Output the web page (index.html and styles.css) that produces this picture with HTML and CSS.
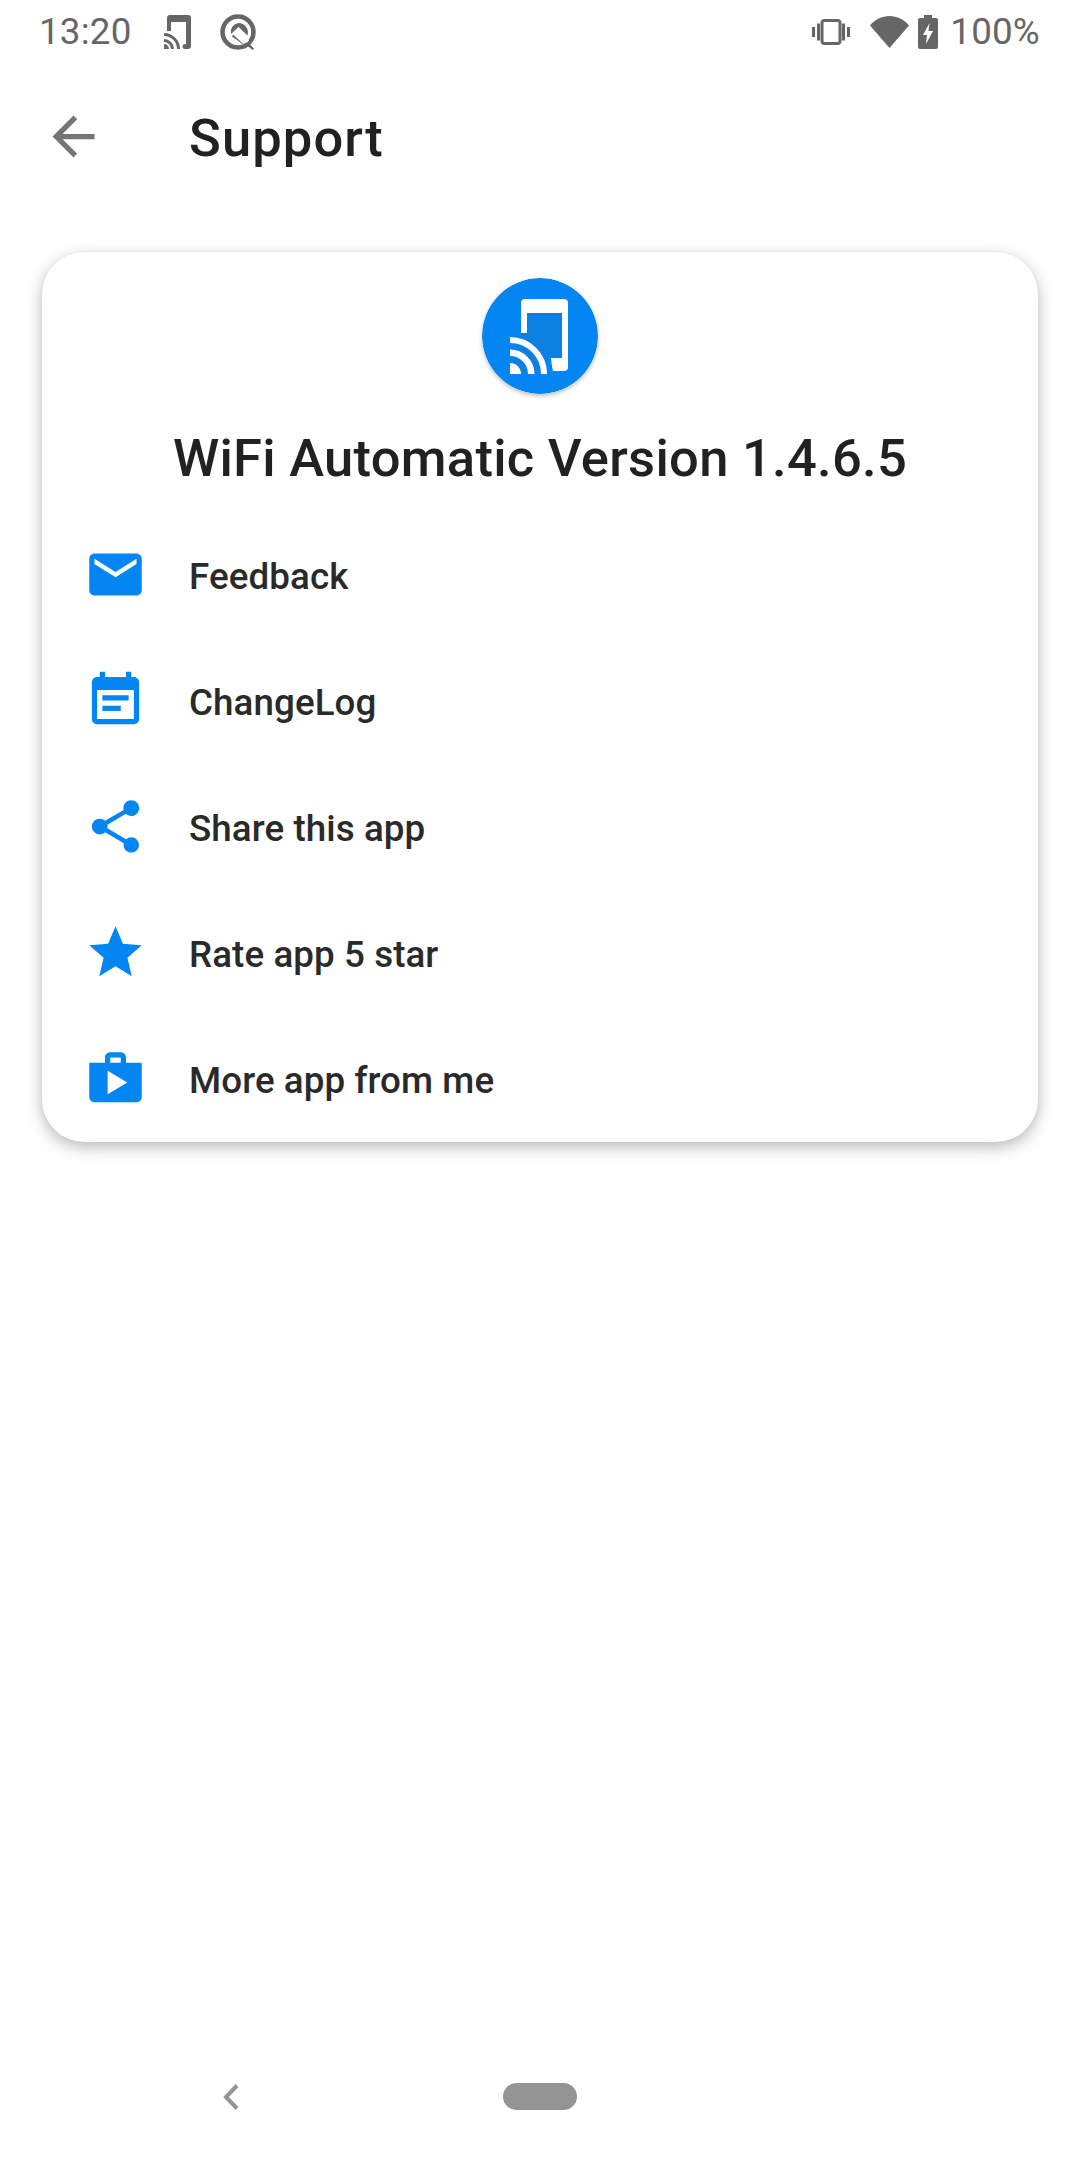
FILE: index.html
```html
<!DOCTYPE html>
<html lang="en">
<head>
  <meta charset="UTF-8">
  <meta name="viewport" content="width=device-width, initial-scale=1.0">
  <title>Support</title>
  <link rel="stylesheet" href="styles.css">
</head>
<body>
  <div class="status-bar">
    <span class="status-text time">13:20</span>
    <svg class="status-cast" viewBox="0 0 29 36"><path d="M7 1h18a3 3 0 0 1 3 3v28a3 3 0 0 1-3 3h-3a2.500 2.500 0 0 1 0-5h1V8H8v9H4V4a3 3 0 0 1 3-3z"/><path d="M1 19a16 16 0 0 1 16 16h-3A13 13 0 0 0 1 22z"/><path d="M1 25a10 10 0 0 1 10 10H8a7 7 0 0 0-7-7z"/><path d="M1 30a5 5 0 0 1 5 5H1z"/></svg>
    <svg class="status-q" viewBox="0 0 36 36"><circle cx="18" cy="18" r="15.500" fill="none" stroke="#666" stroke-width="4.500"/><path d="M18.500 9a9.500 9.500 0 0 1 9 12.500L18.500 13 11 20a9 9 0 0 1 7.500-11z"/><path d="M18 16l11 10.500-2.500 2.500L15.500 18.500z" fill="#fff"/><path d="M13 20.500l12 11 3-3 6 6-1.500 1.500-6-5-2.500 0-12-8.500z"/></svg>
    <div class="status-right">
      <svg class="status-vibrate" viewBox="0 0 38 26"><rect x="10" y="1.500" width="18" height="23" rx="2.500" fill="none" stroke="#666" stroke-width="3"/><rect x="0" y="8" width="3" height="10"/><rect x="5" y="4.500" width="3" height="17"/><rect x="30" y="4.500" width="3" height="17"/><rect x="35" y="8" width="3" height="10"/></svg>
      <svg class="status-wifi" viewBox="0 0 39 32"><path d="M19.500 32L0 9.500C5 3.500 12 0 19.500 0S34 3.500 39 9.500z"/></svg>
      <svg class="status-battery" viewBox="0 0 20 34"><path d="M6 0h8v3h4a2 2 0 0 1 2 2v27a2 2 0 0 1-2 2H2a2 2 0 0 1-2-2V5a2 2 0 0 1 2-2h4z"/><path fill="#fff" d="M11.500 8L5 20h4l-1 9 7-13h-4.500z"/></svg>
      <span class="status-text">100%</span>
    </div>
  </div>

  <div class="toolbar">
    <svg class="back-icon" viewBox="0 0 24 24"><path d="M20 11H7.830l5.590-5.590L12 4l-8 8 8 8 1.410-1.410L7.830 13H20v-2z"/></svg>
    <h1 class="toolbar-title">Support</h1>
  </div>

  <div class="card">
    <svg class="logo" viewBox="0 0 116 116">
      <circle cx="58" cy="58" r="58" fill="#0486f2"/>
      <rect x="45" y="35" width="35" height="48" fill="#0b80e0"/>
      <path fill="#fff" d="M43 21h39a4 4 0 0 1 4 4v64a4 4 0 0 1-4 4H71c-1-4-1.500-9-2-13h11V35H45v20h-6V25a4 4 0 0 1 4-4z"/>
      <path fill="#0b80e0" d="M39 55h6l20 38h-37z"/>
      <g fill="none" stroke="#fff">
        <path stroke-width="6" d="M28 62a34 34 0 0 1 34 34"/>
        <path stroke-width="6.500" d="M28 74.750a21.250 21.250 0 0 1 21.250 21.250"/>
      </g>
      <path fill="#fff" d="M28 85a11 11 0 0 1 11 11H28z"/>
    </svg>
    <h2 class="card-title">WiFi Automatic Version 1.4.6.5</h2>
    <div class="row">
      <svg class="row-icon" viewBox="0 0 24 24"><path d="M20 4H4c-1.100 0-1.990.9-1.990 2L2 18c0 1.100.9 2 2 2h16c1.100 0 2-.9 2-2V6c0-1.100-.9-2-2-2zm0 4l-8 5-8-5V6l8 5 8-5v2z"/></svg>
      <span class="row-label">Feedback</span>
    </div>
    <div class="row">
      <svg class="row-icon" viewBox="0 0 24 24"><path d="M17 10H7v2h10v-2zm2-7h-1V1h-2v2H8V1H6v2H5c-1.110 0-1.990.9-1.990 2L3 19c0 1.100.89 2 2 2h14c1.100 0 2-.9 2-2V5c0-1.100-.9-2-2-2zm0 16H5V8h14v11zm-5-5H7v2h7v-2z"/></svg>
      <span class="row-label">ChangeLog</span>
    </div>
    <div class="row">
      <svg class="row-icon" viewBox="0 0 24 24"><path d="M18 16.080c-.76 0-1.440.3-1.960.77L8.910 12.700c.05-.23.09-.46.09-.7s-.04-.47-.09-.7l7.050-4.110c.54.5 1.250.81 2.040.81 1.660 0 3-1.340 3-3s-1.340-3-3-3-3 1.340-3 3c0 .24.04.47.09.7L8.040 9.810C7.500 9.310 6.790 9 6 9c-1.660 0-3 1.340-3 3s1.340 3 3 3c.79 0 1.500-.31 2.040-.81l7.120 4.160c-.05.21-.08.43-.08.65 0 1.610 1.310 2.920 2.920 2.920 1.610 0 2.920-1.310 2.920-2.920s-1.310-2.920-2.920-2.920z"/></svg>
      <span class="row-label">Share this app</span>
    </div>
    <div class="row">
      <svg class="row-icon" viewBox="0 0 24 24"><path d="M12 17.270L18.180 21l-1.640-7.030L22 9.240l-7.190-.61L12 2 9.190 8.630 2 9.240l5.460 4.730L5.820 21z"/></svg>
      <span class="row-label">Rate app 5 star</span>
    </div>
    <div class="row">
      <svg class="row-icon" viewBox="0 0 24 24"><path d="M16 6V4c0-1.110-.89-2-2-2h-4c-1.110 0-2 .89-2 2v2H2v13c0 1.110.89 2 2 2h16c1.110 0 2-.89 2-2V6h-6zm-6-2h4v2h-4V4zM9 18V9l7.500 4.500L9 18z"/></svg>
      <span class="row-label">More app from me</span>
    </div>
  </div>

  <div class="nav-bar">
    <svg class="nav-back" viewBox="0 0 16 26"><path d="M14 1.500L3 13l11 11.500" fill="none" stroke="#949494" stroke-width="4"/></svg>
    <div class="nav-pill"></div>
  </div>
</body>
</html>
```

FILE: styles.css
```css
:root {
  --blue: #0486f2;
  --text-color: #212121;
  --status-color: #666666;
}

* {
  box-sizing: border-box;
  margin: 0;
  padding: 0;
}

body {
  font-family: 'Roboto', sans-serif;
  background-color: #ffffff;
  color: var(--text-color);
  display: flex;
  flex-direction: column;
  height: 2160px;
  overflow: hidden;
}

/* status bar */
.status-bar {
  display: flex;
  align-items: center;
  height: 63px;
  padding: 0 40px 0 39px;
  fill: var(--status-color);
}

.status-text {
  font-size: 36.750px;
  letter-spacing: 0.200px;
  color: var(--status-color);
}

.time {
  margin-right: 31px;
}

.status-cast {
  width: 29px;
  height: 36px;
  margin-right: 28px;
}

.status-q {
  width: 36px;
  height: 36px;
}

.status-right {
  display: flex;
  align-items: center;
  margin-left: auto;
}

.status-vibrate {
  width: 38px;
  height: 26px;
  margin-right: 20px;
}

.status-wifi {
  width: 39px;
  height: 32px;
  margin-right: 9px;
}

.status-battery {
  width: 20px;
  height: 34px;
  margin-right: 12px;
}

/* toolbar */
.toolbar {
  display: flex;
  align-items: center;
  height: 147px;
  padding-left: 42px;
  gap: 84px;
  flex-shrink: 0;
}

.back-icon {
  width: 63px;
  height: 63px;
  fill: #757575;
}

.toolbar-title {
  font-size: 52.500px;
  font-weight: 500;
  letter-spacing: 1.100px;
  padding-top: 3px;
}

/* card */
.card {
  margin: 42px 42px 0;
  height: 890px;
  background-color: #ffffff;
  border-radius: 42px;
  box-shadow: 0 5px 16px rgba(0, 0, 0, 0.28), 0 0 2px rgba(0, 0, 0, 0.08);
  display: flex;
  flex-direction: column;
  padding-top: 26px;
}

.logo {
  width: 116px;
  height: 116px;
  align-self: center;
  flex-shrink: 0;
  border-radius: 50%;
  box-shadow: 0 2px 4px rgba(0, 0, 0, 0.25);
}

.card-title {
  height: 117.500px;
  line-height: 128px;
  text-align: center;
  font-size: 52.500px;
  font-weight: 500;
  letter-spacing: 0.280px;
}

.row {
  display: flex;
  align-items: center;
  height: 126px;
  padding-left: 42px;
  gap: 42px;
  flex-shrink: 0;
}

.row-icon {
  width: 63px;
  height: 63px;
  fill: var(--blue);
}

.row-label {
  font-size: 36.750px;
  font-weight: 500;
  letter-spacing: 0.080px;
  padding-top: 4px;
  color: #2a2a2a;
}

/* navigation bar */
.nav-bar {
  display: flex;
  align-items: center;
  margin-top: auto;
  height: 27px;
  margin-bottom: 50px;
  padding-left: 223px;
  gap: 264px;
}

.nav-back {
  width: 16px;
  height: 26px;
}

.nav-pill {
  width: 74px;
  height: 27px;
  border-radius: 14px;
  background-color: #949494;
}
```
